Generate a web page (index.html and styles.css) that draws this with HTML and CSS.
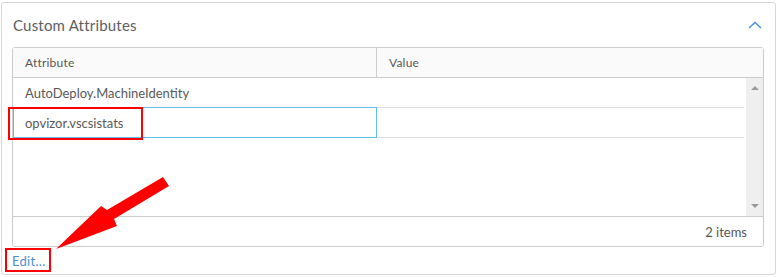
FILE: index.html
```html
<!DOCTYPE html>
<html lang="en">
<head>
    <meta charset="UTF-8">
    <meta name="viewport" content="width=device-width, initial-scale=1.0">
    <title>Custom Attributes</title>
    <link rel="stylesheet" href="styles.css">
</head>
<body>

    <div class="card">
        <div class="card-header">
            <span class="card-title">Custom Attributes</span>
            <svg class="chevron" width="14" height="8" viewBox="0 0 14 8">
                <polyline points="1,7 7,1.5 13,7" fill="none" stroke="#4a90d9" stroke-width="1.5"/>
            </svg>
        </div>

        <div class="grid">
            <div class="grid-head">
                <div class="col col-attr">Attribute</div>
                <div class="col col-val">Value</div>
            </div>
            <div class="grid-body">
                <div class="rows">
                    <div class="row">
                        <div class="cell col-attr">AutoDeploy.MachineIdentity</div>
                        <div class="cell col-val"></div>
                    </div>
                    <div class="row">
                        <div class="cell col-attr editing">opvizor.vscsistats</div>
                        <div class="cell col-val"></div>
                    </div>
                </div>
                <div class="scrollbar">
                    <span class="scroll-up"></span>
                    <span class="scroll-down"></span>
                </div>
            </div>
            <div class="grid-foot">2 items</div>
        </div>

        <div class="card-actions">
            <a href="#" class="edit-link">Edit...</a>
        </div>
    </div>

    <!-- annotations drawn over the screenshot -->
    <div class="mark mark-row"></div>
    <div class="mark mark-edit"></div>
    <svg class="arrow" width="778" height="277" viewBox="0 0 778 277">
        <polygon points="163,177 169,186 114,219 117,226 56,249 101,206 107,210" fill="#ff0000"/>
    </svg>

</body>
</html>
```

FILE: styles.css
```css
* {
    box-sizing: border-box;
}
body {
    margin: 0;
    background: #fff;
    font-family: Lato, "Open Sans", sans-serif;
    color: #565656;
}
.card {
    width: 775px;
    height: 273px;
    margin: 2px 0 0 1px;
    padding: 0 11px 0 10px;
    border: 1px solid #d7d7d7;
    border-radius: 3px;
    display: flex;
    flex-direction: column;
}
.card-header {
    height: 44px;
    display: flex;
    align-items: center;
    justify-content: space-between;
    padding-left: 1px;
}
.card-title {
    font-size: 15px;
    color: #5e5e5e;
    letter-spacing: 0.2px;
}
.chevron {
    margin-right: 2px;
}
.grid {
    border: 1px solid #ccc;
    border-radius: 3px;
    display: flex;
    flex-direction: column;
    height: 200px;
}
.grid-head {
    display: flex;
    height: 30px;
    background: #fafafa;
    border-bottom: 1px solid #ccc;
    font-size: 12px;
    color: #565656;
    letter-spacing: 0.2px;
}
.col-attr {
    width: 364px;
}
.grid-head .col {
    display: flex;
    align-items: center;
    padding-left: 12px;
}
.grid-head .col-attr {
    border-right: 1px solid #ccc;
}
.grid-body {
    display: flex;
    height: 138px;
}
.rows {
    flex: 1;
    padding-right: 2px;
}
.row {
    display: flex;
    height: 30px;
    border-bottom: 1px solid #ddd;
}
.cell {
    display: flex;
    align-items: center;
    padding-left: 12px;
    font-size: 13px;
    color: #595959;
}
.cell.editing {
    border: 1px solid #5fbde6;
    margin-top: -1px;
    height: 31px;
    padding-left: 11px;
}
.scrollbar {
    width: 17px;
    background: #efefef;
    position: relative;
}
.scroll-up,
.scroll-down {
    position: absolute;
    left: 5px;
    width: 0;
    height: 0;
    border-left: 4px solid transparent;
    border-right: 4px solid transparent;
}
.scroll-up {
    top: 8px;
    border-bottom: 4px solid #9a9a9a;
}
.scroll-down {
    bottom: 8px;
    border-top: 4px solid #9a9a9a;
}
.grid-foot {
    height: 30px;
    border-top: 1px solid #ccc;
    display: flex;
    align-items: center;
    justify-content: flex-end;
    padding-right: 16px;
    font-size: 13px;
    color: #565656;
}
.card-actions {
    flex: 1;
    display: flex;
    align-items: center;
}
.edit-link {
    font-size: 13px;
    color: #4a8fd4;
    text-decoration: none;
    letter-spacing: 0.3px;
}
.mark {
    position: absolute;
    border: 2px solid #ff0000;
}
.mark-row {
    left: 8px;
    top: 107px;
    width: 135px;
    height: 33px;
}
.mark-edit {
    left: 5px;
    top: 248px;
    width: 46px;
    height: 24px;
}
.arrow {
    position: absolute;
    left: 0;
    top: 0;
    pointer-events: none;
}
```
